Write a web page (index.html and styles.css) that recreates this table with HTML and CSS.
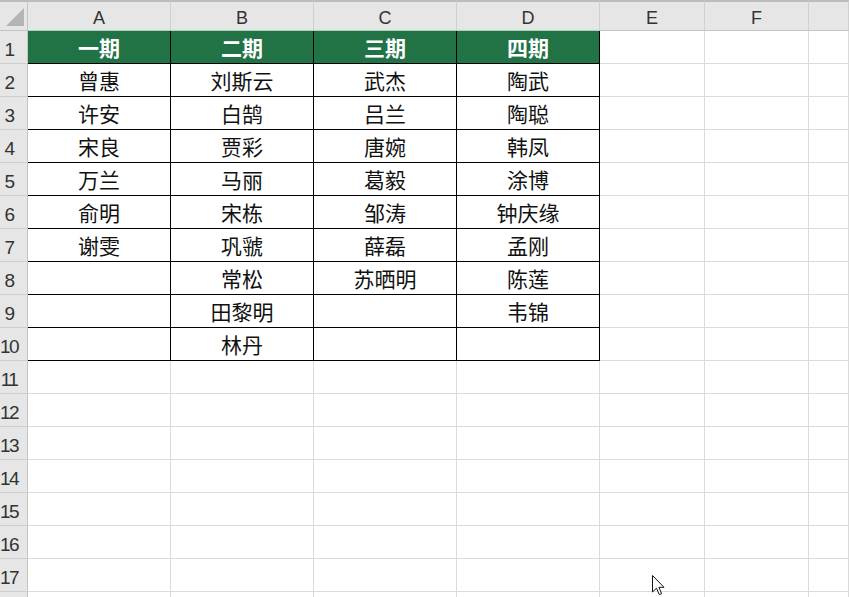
FILE: index.html
```html
<!DOCTYPE html>
<html lang="zh">
<head>
<meta charset="utf-8">
<title>Sheet</title>
<link rel="stylesheet" href="styles.css">
</head>
<body>
<div class="sheet">
  <div class="corner"><span class="tri"></span></div>
  <div class="ch sel">A</div><div class="ch sel">B</div><div class="ch sel">C</div><div class="ch sel">D</div><div class="ch">E</div><div class="ch">F</div><div class="ch"></div>

  <div class="rh">1</div><div class="c t h">一期</div><div class="c t h">二期</div><div class="c t h">三期</div><div class="c t h">四期</div><div class="c"></div><div class="c"></div><div class="c"></div>
  <div class="rh">2</div><div class="c t">曾惠</div><div class="c t">刘斯云</div><div class="c t">武杰</div><div class="c t">陶武</div><div class="c"></div><div class="c"></div><div class="c"></div>
  <div class="rh">3</div><div class="c t">许安</div><div class="c t">白鹄</div><div class="c t">吕兰</div><div class="c t">陶聪</div><div class="c"></div><div class="c"></div><div class="c"></div>
  <div class="rh">4</div><div class="c t">宋良</div><div class="c t">贾彩</div><div class="c t">唐婉</div><div class="c t">韩凤</div><div class="c"></div><div class="c"></div><div class="c"></div>
  <div class="rh">5</div><div class="c t">万兰</div><div class="c t">马丽</div><div class="c t">葛毅</div><div class="c t">涂博</div><div class="c"></div><div class="c"></div><div class="c"></div>
  <div class="rh">6</div><div class="c t">俞明</div><div class="c t">宋栋</div><div class="c t">邹涛</div><div class="c t">钟庆缘</div><div class="c"></div><div class="c"></div><div class="c"></div>
  <div class="rh">7</div><div class="c t">谢雯</div><div class="c t">巩虢</div><div class="c t">薛磊</div><div class="c t">孟刚</div><div class="c"></div><div class="c"></div><div class="c"></div>
  <div class="rh">8</div><div class="c t"></div><div class="c t">常松</div><div class="c t">苏晒明</div><div class="c t">陈莲</div><div class="c"></div><div class="c"></div><div class="c"></div>
  <div class="rh">9</div><div class="c t"></div><div class="c t">田黎明</div><div class="c t"></div><div class="c t">韦锦</div><div class="c"></div><div class="c"></div><div class="c"></div>
  <div class="rh">10</div><div class="c t"></div><div class="c t">林丹</div><div class="c t"></div><div class="c t"></div><div class="c"></div><div class="c"></div><div class="c"></div>
  <div class="rh">11</div><div class="c"></div><div class="c"></div><div class="c"></div><div class="c"></div><div class="c"></div><div class="c"></div><div class="c"></div>
  <div class="rh">12</div><div class="c"></div><div class="c"></div><div class="c"></div><div class="c"></div><div class="c"></div><div class="c"></div><div class="c"></div>
  <div class="rh">13</div><div class="c"></div><div class="c"></div><div class="c"></div><div class="c"></div><div class="c"></div><div class="c"></div><div class="c"></div>
  <div class="rh">14</div><div class="c"></div><div class="c"></div><div class="c"></div><div class="c"></div><div class="c"></div><div class="c"></div><div class="c"></div>
  <div class="rh">15</div><div class="c"></div><div class="c"></div><div class="c"></div><div class="c"></div><div class="c"></div><div class="c"></div><div class="c"></div>
  <div class="rh">16</div><div class="c"></div><div class="c"></div><div class="c"></div><div class="c"></div><div class="c"></div><div class="c"></div><div class="c"></div>
  <div class="rh">17</div><div class="c"></div><div class="c"></div><div class="c"></div><div class="c"></div><div class="c"></div><div class="c"></div><div class="c"></div>
  <div class="rh"></div><div class="c"></div><div class="c"></div><div class="c"></div><div class="c"></div><div class="c"></div><div class="c"></div><div class="c"></div>
</div>
<svg class="cursor" width="14" height="22" viewBox="0 0 14 22">
  <path d="M0.5 0.5 L0.5 17 L4.5 13.2 L7.3 19.6 L9.6 18.6 L6.9 12.3 L12 12.3 Z" fill="#ffffff" stroke="#111111" stroke-width="1"/>
</svg>
</body>
</html>
```

FILE: styles.css
```css
html, body {
  margin: 0;
  padding: 0;
  background: #ffffff;
  overflow: hidden;
}

.sheet {
  display: grid;
  grid-template-columns: 28px 143px 143px 143px 143px 105px 104px 1fr;
  grid-template-rows: 31px repeat(18, 33px);
  width: 849px;
  height: 597px;
  overflow: hidden;
  font-family: "Noto Sans CJK SC", "Noto Sans", sans-serif;
}

.corner {
  background: #e6e6e6;
  border-top: 2px solid #bcbcbc;
  border-right: 1px solid #c4c4c4;
  border-bottom: 1px solid #c4c4c4;
  box-sizing: border-box;
  position: relative;
}

.tri {
  position: absolute;
  right: 3px;
  bottom: 4px;
  width: 0;
  height: 0;
  border-left: 18px solid transparent;
  border-bottom: 18px solid #b4b4b4;
}

.ch {
  background: #e6e6e6;
  border-top: 2px solid #bcbcbc;
  border-right: 1px solid #d0d0d0;
  border-bottom: 1px solid #c4c4c4;
  box-sizing: border-box;
  display: flex;
  align-items: center;
  justify-content: center;
  font-family: "Liberation Sans", Arial, sans-serif;
  font-size: 18px;
  color: #333333;
  padding-top: 4px;
}

.ch.sel {
  box-shadow: inset 0 -2px 0 #d3efe0;
}

.rh {
  background: #e6e6e6;
  border-right: 1px solid #c4c4c4;
  border-bottom: 1px solid #cdcdcd;
  box-sizing: border-box;
  display: flex;
  align-items: flex-end;
  justify-content: center;
  padding-right: 9px;
  padding-bottom: 2px;
  font-family: "Liberation Sans", Arial, sans-serif;
  font-size: 19px;
  letter-spacing: -1.5px;
  color: #333333;
  overflow: visible;
}

.c {
  border-right: 1px solid #dadada;
  border-bottom: 1px solid #dadada;
  box-sizing: border-box;
  display: flex;
  align-items: center;
  justify-content: center;
  font-size: 21px;
  color: #111111;
  white-space: nowrap;
}

.c.t {
  border-right-color: #000000;
  border-bottom-color: #000000;
}

.c.h {
  background: #217346;
  color: #ffffff;
  font-weight: 700;
}

.cursor {
  position: absolute;
  left: 652px;
  top: 575px;
}
```
